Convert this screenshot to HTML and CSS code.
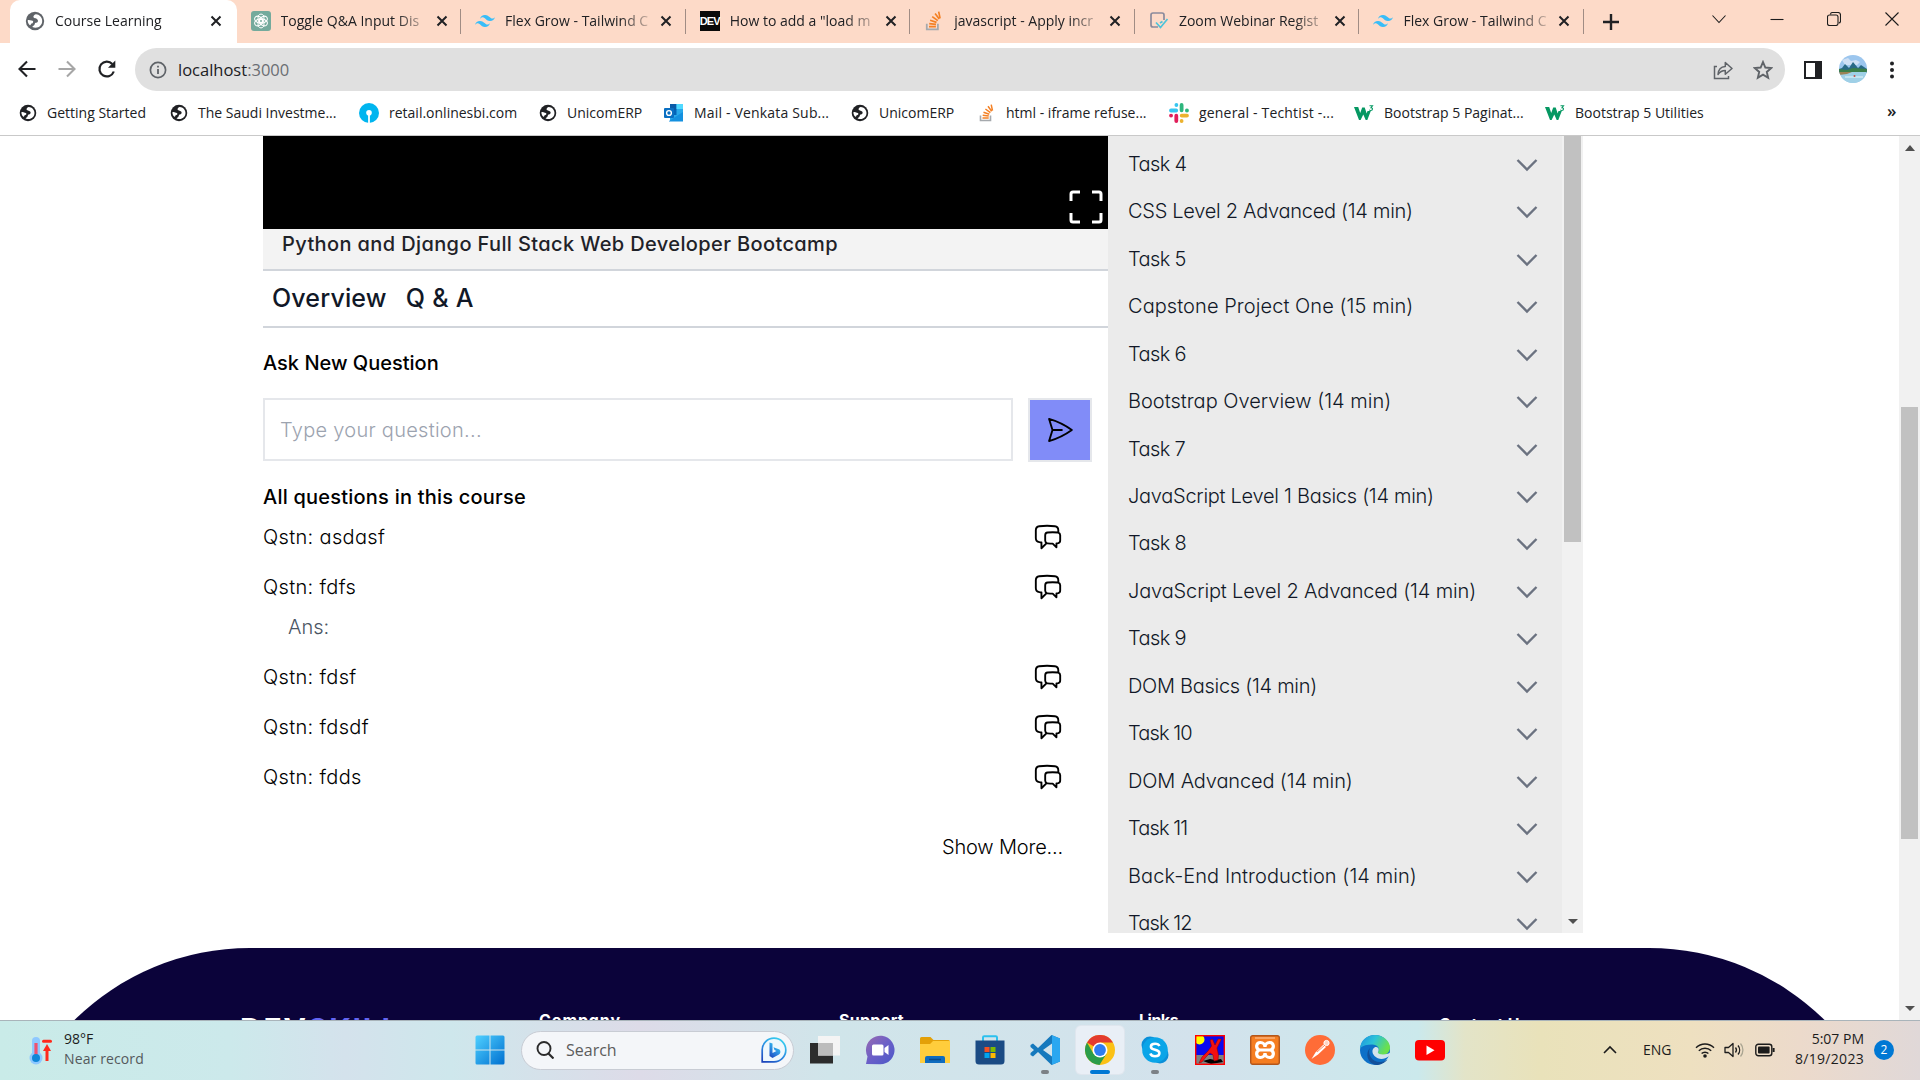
FILE: index.html
```html
<!DOCTYPE html>
<html lang="en">
<head>
<meta charset="utf-8">
<title>Course Learning</title>
<link rel="stylesheet" href="styles.css">
</head>
<body>
<svg class="defs" aria-hidden="true">
  <symbol id="globe" viewBox="0 0 20 20"><circle cx="10" cy="10" r="9.2" fill="currentColor"/><path d="M11 3.2c-1.400.3-2.600 1.200-2.600 2.600 0 1.600 2.900 1.300 4 2.600 1.300 1.500.2 3.300-1.700 3.400-1 .1-.7 1.400-1.400 2.300-.5.700-1.400.9-2 1.900 5 2.300 9.900-1 9.900-6 0-4-3-6.700-6.200-6.800zM2.700 9.200c1.200-.6 2.400.2 3.800.4 1.800.2 2.200 1.300 1.200 2.300-.8.800-1.700.3-1.900 1.500-.1.800-.6 1.100-1.200.6-1.300-1.200-2-3-1.900-4.800z" fill="#fff"/></symbol>
  <symbol id="close" viewBox="0 0 12 12"><path d="M1.500 1.500l9 9M10.500 1.500l-9 9" stroke="#202124" stroke-width="2"/></symbol>
  <symbol id="tailwind" viewBox="0 0 54 33"><path fill="#38bdf8" d="M27 0c-7.200 0-11.700 3.600-13.500 10.800 2.700-3.600 5.850-4.950 9.450-4.050 2.054.513 3.522 2.004 5.147 3.653C30.744 13.090 33.808 16.200 40.500 16.200c7.200 0 11.700-3.600 13.500-10.800-2.700 3.600-5.850 4.950-9.450 4.050-2.054-.513-3.522-2.004-5.147-3.653C36.756 3.110 33.692 0 27 0zM13.500 16.200C6.300 16.200 1.800 19.800 0 27c2.700-3.600 5.850-4.950 9.450-4.050 2.054.514 3.522 2.004 5.147 3.653C17.244 29.290 20.308 32.400 27 32.400c7.200 0 11.700-3.600 13.500-10.800-2.700 3.600-5.850 4.950-9.450 4.050-2.054-.513-3.522-2.004-5.147-3.653C23.256 19.310 20.192 16.200 13.500 16.200z"/></symbol>
  <symbol id="stack" viewBox="0 0 16 18"><path d="M1.500 11.500v5h10v-5" fill="none" stroke="#a5a9ad" stroke-width="1.600"/><path d="M3.500 14h6.200M3.700 11.300l6.100.8M4.500 8.300l5.800 1.900M6.400 5l5 3.600M9 2.200l3.700 5M12.200.6l1.300 6" stroke="#f48024" stroke-width="1.500"/></symbol>
  <symbol id="w3" viewBox="0 0 20 16"><path d="M0 2h4.200l2 6 2-5.500h2.500l2 6L13.500 6h3.300l-3.500 9h-1.600L9.300 9.500 6.600 15H5z" fill="#059862"/><path d="M15.500.8h3l-1.500 1.900c2 0 2 2.800-.2 2.800-.7 0-1.200-.3-1.500-.8" fill="none" stroke="#059862" stroke-width="1.100"/></symbol>
  <symbol id="chev" viewBox="0 0 22 14"><path d="M1.500 2l9.500 9.500L20.500 2" fill="none" stroke="#6b7280" stroke-width="2.400"/></symbol>
  <symbol id="chat" viewBox="0 0 24 24"><path fill="none" stroke="#000" stroke-width="1.500" stroke-linecap="round" stroke-linejoin="round" d="M20.250 8.511c.884.284 1.500 1.128 1.500 2.097v4.286c0 1.136-.847 2.100-1.980 2.193-.34.027-.68.052-1.020.072v3.091l-3-3c-1.354 0-2.694-.055-4.020-.163a2.115 2.115 0 01-.825-.242m9.345-8.334a2.126 2.126 0 00-.476-.095 48.640 48.640 0 00-8.048 0c-1.131.094-1.976 1.057-1.976 2.192v4.286c0 .837.46 1.580 1.155 1.951m9.345-8.334V6.637c0-1.621-1.152-3.026-2.760-3.235A48.455 48.455 0 0011.250 3c-2.115 0-4.198.137-6.240.402-1.608.209-2.760 1.614-2.760 3.235v6.226c0 1.621 1.152 3.026 2.760 3.235.577.075 1.157.14 1.740.194V21l4.155-4.155"/></symbol>
</svg>

<header class="tabstrip">
  <div class="tab active"><svg class="i20 grey"><use href="#globe"/></svg><span class="label"><b>Course Learning</b></span><svg class="x"><use href="#close"/></svg></div>
  <div class="tab"><svg class="i20" viewBox="0 0 20 20"><rect width="20" height="20" rx="3" fill="#74aa9c"/><g fill="none" stroke="#fff" stroke-width="1"><ellipse cx="10" cy="7.300" rx="3" ry="4.200"/><ellipse cx="10" cy="7.300" rx="3" ry="4.200" transform="rotate(60 10 10)"/><ellipse cx="10" cy="7.300" rx="3" ry="4.200" transform="rotate(120 10 10)"/><ellipse cx="10" cy="7.300" rx="3" ry="4.200" transform="rotate(180 10 10)"/><ellipse cx="10" cy="7.300" rx="3" ry="4.200" transform="rotate(240 10 10)"/><ellipse cx="10" cy="7.300" rx="3" ry="4.200" transform="rotate(300 10 10)"/></g></svg><span class="label"><b>Toggle Q&amp;A Input Dis</b></span><svg class="x"><use href="#close"/></svg></div>
  <div class="tab"><svg class="i20"><use href="#tailwind"/></svg><span class="label"><b>Flex Grow - Tailwind C</b></span><svg class="x"><use href="#close"/></svg></div>
  <div class="tab"><span class="dev">DEV</span><span class="label"><b>How to add a "load m</b></span><svg class="x"><use href="#close"/></svg></div>
  <div class="tab"><svg class="i20"><use href="#stack"/></svg><span class="label"><b>javascript - Apply incr</b></span><svg class="x"><use href="#close"/></svg></div>
  <div class="tab"><svg class="i20" viewBox="0 0 20 20"><path d="M9 16H4a2 2 0 01-2-2V4a2 2 0 012-2h9a2 2 0 012 2v5" fill="none" stroke="#8a8a9c" stroke-width="1.700"/><path d="M7 11.500l4.500 5L18.500 8M11 12l2.500-1.500" fill="none" stroke="#4cc3d9" stroke-width="1.700"/></svg><span class="label"><b>Zoom Webinar Regist</b></span><svg class="x"><use href="#close"/></svg></div>
  <div class="tab"><svg class="i20"><use href="#tailwind"/></svg><span class="label"><b>Flex Grow - Tailwind C</b></span><svg class="x"><use href="#close"/></svg></div>
  <svg class="plus" viewBox="0 0 16 16"><path d="M8 0v16M0 8h16" stroke="#202124" stroke-width="2.400"/></svg>
  <div class="winctl">
    <svg viewBox="0 0 14 14"><path d="M.5 3.500L7 10.500l6.500-7"/></svg>
    <svg viewBox="0 0 14 14"><path d="M.5 7.500h13"/></svg>
    <svg viewBox="0 0 14 14"><rect x=".5" y="3" width="10.500" height="10.500" rx="2"/><path d="M3.500 2.500c0-1.200.6-2 2-2h5.500c1.600 0 2.500 1 2.500 2.500V9c0 1.200-.6 2-1.800 2"/></svg>
    <svg viewBox="0 0 14 14"><path d="M.5.5l13 13M13.500.5l-13 13"/></svg>
  </div>
</header>

<div class="toolbar">
  <svg class="nav" viewBox="0 0 20 20"><path d="M18.500 10H3M10 2.500L2.500 10l7.500 7.500" fill="none" stroke="#202124" stroke-width="2.100"/></svg>
  <svg class="nav" viewBox="0 0 20 20"><path d="M1.500 10H17M10 2.500l7.500 7.500-7.500 7.500" fill="none" stroke="#a6a6a6" stroke-width="2.100"/></svg>
  <svg class="nav" viewBox="0 0 20 20"><path d="M16.800 12.500A7.400 7.400 0 1115.300 5" fill="none" stroke="#202124" stroke-width="2.200"/><path d="M18.300 1.500v7.300H11z" fill="#202124"/></svg>
  <div class="omnibox">
    <svg class="info" viewBox="0 0 18 18"><circle cx="9" cy="9" r="7.600" fill="none" stroke="#5f6368" stroke-width="1.700"/><path d="M9 8v5M9 4.800v1.800" stroke="#5f6368" stroke-width="1.800"/></svg>
    <span class="url"><b>localhost<i>:3000</i></b></span>
    <svg class="share" viewBox="0 0 20 20"><path d="M4 6.500H1.500v12h14V16" fill="none" stroke="#5f6368" stroke-width="1.500"/><path d="M5 14.500c.3-5.300 3-7.800 7.300-8.100V2.500L19 8.500l-6.700 5.800v-3.700C9 10.600 6.800 11.900 5 14.500z" fill="none" stroke="#5f6368" stroke-width="1.500" stroke-linejoin="round"/></svg>
    <svg class="star" viewBox="0 0 20 20"><path d="M10 2l2.350 5.500 5.950.5-4.500 3.950 1.350 5.850L10 14.700l-5.150 3.100L6.200 11.950 1.700 8l5.950-.5z" fill="none" stroke="#5f6368" stroke-width="1.900"/></svg>
  </div>
  <svg class="panel" viewBox="0 0 18 18"><rect x="1" y="1" width="16" height="16" fill="#fff" stroke="#202124" stroke-width="2"/><path d="M11 1h6v16h-6z" fill="#202124"/></svg>
  <svg class="avatar" viewBox="0 0 28 28"><clipPath id="av"><circle cx="14" cy="14" r="14"/></clipPath><g clip-path="url(#av)"><path fill="#9cc6ee" d="M0 0h28v28H0z"/><path fill="#cfe0f5" d="M3 5l6-2 3 3 5-1 4 2-3 3H6z"/><path fill="#2a6a86" d="M0 14l3-1 3-4 4 4 4-6 5 6 3-3 6 4v4H0z"/><path fill="#3b7f4a" d="M0 14l8 1 6-2 14 1v3H0z"/><path fill="#9fd0e6" d="M0 17h28v11H0z"/><path fill="#9b8355" d="M0 17l13 0-5 2-8 1z"/><path fill="#c4e4f0" d="M6 21h18v2H6z"/><circle cx="15.500" cy="21" r="1" fill="#c0504a"/></g></svg>
  <svg class="dots" viewBox="0 0 4 18"><circle cx="2" cy="2.500" r="2"/><circle cx="2" cy="9" r="2"/><circle cx="2" cy="15.500" r="2"/></svg>
</div>

<nav class="bookmarks">
  <a><svg class="i18"><use href="#globe"/></svg><b>Getting Started</b></a>
  <a><svg class="i18"><use href="#globe"/></svg><b>The Saudi Investme...</b></a>
  <a><svg class="i20" viewBox="0 0 20 20"><circle cx="10" cy="10" r="10" fill="#00b5ef"/><circle cx="10" cy="9.700" r="2.800" fill="#fff"/><path d="M9.100 10h1.800v10H9.100z" fill="#fff"/></svg><b>retail.onlinesbi.com</b></a>
  <a><svg class="i18"><use href="#globe"/></svg><b>UnicomERP</b></a>
  <a class="loose"><svg class="i20" viewBox="0 0 20 20"><path fill="#28a8ea" d="M6 1h13v17H6z"/><path fill="#0a5ba8" d="M6 1h6.500v6H6z"/><path fill="#50d9ff" d="M12.500 1H19v5h-6.500z"/><path fill="#0364b8" d="M6 7h6.500v5H6z"/><path fill="#1490df" d="M5 18l14-9v9.500H5z"/><rect y="5" width="10" height="10" rx="1" fill="#0a6fc2"/><circle cx="5" cy="10" r="2.400" fill="none" stroke="#fff" stroke-width="1.400"/></svg><b>Mail - Venkata Sub...</b></a>
  <a><svg class="i18"><use href="#globe"/></svg><b>UnicomERP</b></a>
  <a><svg class="i18"><use href="#stack"/></svg><b>html - iframe refuse...</b></a>
  <a class="loose"><svg class="i20" viewBox="0 0 20 20"><g stroke-width="3.800" stroke-linecap="round"><path stroke="#36c5f0" d="M2 7.500h5.200M7.400 2v.1"/><path stroke="#2eb67d" d="M12.600 2v5.300M18 7.500h-.1"/><path stroke="#ecb22e" d="M12.700 12.600H18M12.600 18v-.1"/><path stroke="#e01e5a" d="M7.300 12.700V18M2 12.600h.1"/></g></svg><b>general - Techtist -...</b></a>
  <a><svg class="i20 w3"><use href="#w3"/></svg><b>Bootstrap 5 Paginat...</b></a>
  <a><svg class="i20 w3"><use href="#w3"/></svg><b>Bootstrap 5 Utilities</b></a>
  <span class="more">»</span>
</nav>

<div class="viewport">
  <div class="page">
    <main class="course">
      <section class="lesson">
        <div class="video"><svg viewBox="0 0 34 34"><path d="M2 11V4a2 2 0 012-2h7M23 2h7a2 2 0 012 2v7M32 23v7a2 2 0 01-2 2h-7M11 32H4a2 2 0 01-2-2v-7" fill="none" stroke="#fff" stroke-width="3"/></svg></div>
        <h1 class="title"><b>Python and Django Full Stack Web Developer Bootcamp</b></h1>
        <div class="subtabs"><b class="ov">Overview</b><b class="qa">Q &amp; A</b></div>
        <h2 class="h"><b>Ask New Question</b></h2>
        <div class="ask">
          <div class="field"><b>Type your question...</b></div>
          <div class="send"><svg viewBox="0 0 24 24"><path fill="none" stroke="#000" stroke-width="1.500" stroke-linecap="round" stroke-linejoin="round" d="M6 12L3.269 3.126A59.768 59.768 0 0121.485 12 59.770 59.770 0 013.270 20.876L5.999 12zm0 0h7.500"/></svg></div>
        </div>
        <h2 class="h all"><b>All questions in this course</b></h2>
        <div class="q"><b>Qstn: asdasf</b><svg><use href="#chat"/></svg></div>
        <div class="q"><b>Qstn: fdfs</b><svg><use href="#chat"/></svg></div>
        <div class="ans"><b>Ans:</b></div>
        <div class="q"><b>Qstn: fdsf</b><svg><use href="#chat"/></svg></div>
        <div class="q"><b>Qstn: fdsdf</b><svg><use href="#chat"/></svg></div>
        <div class="q"><b>Qstn: fdds</b><svg><use href="#chat"/></svg></div>
        <div class="show"><b>Show More...</b></div>
      </section>
      <aside class="outline">
        <div class="items">
          <div class="task"><b>Task 4</b><svg><use href="#chev"/></svg></div>
          <div class="snug"><b>CSS Level 2 Advanced (14 min)</b><svg><use href="#chev"/></svg></div>
          <div class="task"><b>Task 5</b><svg><use href="#chev"/></svg></div>
          <div class="wide"><b>Capstone Project One (15 min)</b><svg><use href="#chev"/></svg></div>
          <div class="task"><b>Task 6</b><svg><use href="#chev"/></svg></div>
          <div><b>Bootstrap Overview (14 min)</b><svg><use href="#chev"/></svg></div>
          <div class="task"><b>Task 7</b><svg><use href="#chev"/></svg></div>
          <div class="snug"><b>JavaScript Level 1 Basics (14 min)</b><svg><use href="#chev"/></svg></div>
          <div class="task"><b>Task 8</b><svg><use href="#chev"/></svg></div>
          <div class="near"><b>JavaScript Level 2 Advanced (14 min)</b><svg><use href="#chev"/></svg></div>
          <div class="task"><b>Task 9</b><svg><use href="#chev"/></svg></div>
          <div class="snug"><b>DOM Basics (14 min)</b><svg><use href="#chev"/></svg></div>
          <div class="task ten"><b>Task 10</b><svg><use href="#chev"/></svg></div>
          <div class="near"><b>DOM Advanced (14 min)</b><svg><use href="#chev"/></svg></div>
          <div class="task ten"><b>Task 11</b><svg><use href="#chev"/></svg></div>
          <div class="wide"><b>Back-End Introduction (14 min)</b><svg><use href="#chev"/></svg></div>
          <div class="task ten"><b>Task 12</b><svg><use href="#chev"/></svg></div>
        </div>
        <div class="track inner"><span class="thumb"></span><span class="down"></span></div>
      </aside>
    </main>
    <footer class="foot">
      <div class="logo">DEV<em>SKILL</em></div>
      <div class="f1"><b>Company</b></div>
      <div class="f2"><b>Support</b></div>
      <div class="f3"><b>Links</b></div>
      <div class="f4"><b>Contact Us</b></div>
    </footer>
  </div>
  <div class="track outer"><span class="up"></span><span class="thumb"></span><span class="down"></span></div>
</div>

<div class="taskbar">
  <svg class="therm" viewBox="0 0 24 30"><rect x="3" y="1" width="8" height="22" rx="4" fill="#8ec8ff"/><circle cx="7" cy="22" r="6.500" fill="#8ec8ff"/><path d="M7 7v13" stroke="#f0506e" stroke-width="3.200"/><circle cx="7" cy="22" r="4" fill="#0f86d8"/><path d="M14.500 5.200h7" stroke="#ff2a1c" stroke-width="3" stroke-linecap="round"/><path d="M18 25V13" stroke="#ff2a1c" stroke-width="3"/><path d="M18 8l4 7h-8z" fill="#ff2a1c"/></svg>
  <div class="weather"><span><b>98°F</b></span><span class="dim"><b>Near record</b></span></div>
  <svg class="start" viewBox="0 0 30 30"><defs><linearGradient id="wg" x1="0" y1="0" x2="1" y2="1"><stop offset="0" stop-color="#4fd0ff"/><stop offset="1" stop-color="#0070d0"/></linearGradient></defs><path fill="url(#wg)" d="M2 .5h12.500V14.500H.5V2A1.500 1.500 0 012 .5zM15.500.5H28A1.500 1.500 0 0129.500 2v12.500h-14zM.5 15.500h14v14H2A1.500 1.500 0 01.5 28zM15.500 15.500h14V28a1.500 1.500 0 01-1.500 1.500H15.500z"/></svg>
  <div class="search"><svg class="mag" viewBox="0 0 18 18"><circle cx="8" cy="7.500" r="6.500" fill="none" stroke="#2b2b2b" stroke-width="1.900"/><path d="M12.500 12.500l5 5" stroke="#2b2b2b" stroke-width="2.200"/></svg><span><b>Search</b></span><svg class="bing" viewBox="0 0 26 26"><defs><linearGradient id="bg" x1="0" y1="1" x2=".6" y2="0"><stop offset="0" stop-color="#1a3fb8"/><stop offset=".5" stop-color="#2a87e0"/><stop offset="1" stop-color="#35c8ee"/></linearGradient></defs><path d="M1.200 24.800V13A11.800 11.800 0 1113 24.800z" fill="#eef8fd" stroke="url(#bg)" stroke-width="1.700"/><path d="M8.500 5.500l3 1v9.500l4-2-2-1-1-2.800 6 2.300c1.500 1.500 1 4-.5 5l-6.500 3.500-3-2z" fill="url(#bg)"/></svg></div>
  <div class="apps">
    <div><svg viewBox="0 0 30 30"><path d="M0 8h23v20.500H0z" fill="#2c2c2c"/><path d="M8 1h22v19.500H8z" fill="#f4f4f4"/><path d="M8 8h15v12.500H8z" fill="#bcbcbc"/></svg></div>
    <div><svg viewBox="0 0 30 30"><defs><linearGradient id="tg" x1="0" y1="0" x2="1" y2="1"><stop offset="0" stop-color="#9a6bb0"/><stop offset=".5" stop-color="#6a5fc8"/><stop offset="1" stop-color="#4a58c8"/></linearGradient></defs><path d="M1 29l1.500-7.500A14.300 14.300 0 1115 29.300z" fill="url(#tg)"/><rect x="7" y="9.500" width="11.500" height="11" rx="1.500" fill="#fff"/><path d="M19.500 13l4-3v10l-4-3z" fill="#fff"/></svg></div>
    <div><svg viewBox="0 0 30 30"><path d="M0 3.500A1.500 1.500 0 011.500 2h9l3 3H28.500A1.500 1.500 0 0130 6.500V14H0z" fill="#e3a008"/><path d="M0 9h10l3-3h17v22H0z" fill="#ffcd3c"/><path d="M5 28v-5a2 2 0 012-2h16a2 2 0 012 2v5z" fill="#0f6cbf"/><path d="M9 24.500h12" stroke="#0a4a8a" stroke-width="1.500"/></svg></div>
    <div><svg viewBox="0 0 30 30"><path d="M8 7V2.500A1.200 1.200 0 019.200 1.300h11.600A1.200 1.200 0 0122 2.500V7" fill="none" stroke="#2bc0ee" stroke-width="2"/><path d="M.5 5.500h29V26a3.500 3.500 0 01-3.500 3.500H4A3.500 3.500 0 01.5 26z" fill="#1b4b84"/><path fill="#f25022" d="M9.500 12h5v5h-5z"/><path fill="#7fba00" d="M15.500 12h5v5h-5z"/><path fill="#00a4ef" d="M9.500 18h5v5h-5z"/><path fill="#ffb900" d="M15.500 18h5v5h-5z"/></svg></div>
    <div class="run"><svg viewBox="0 0 30 30"><path d="M21.500 0L30 3.500v23L21.500 30 8 17 3 21.500.5 20V18L4 15 .5 12v-2L3 8.500 8 13zM22 8.500L13 15l9 6.500z" fill="#1579bd" fill-rule="evenodd"/><path d="M22 .2L30 3.500v23l-8 3.300z" fill="#2aa7f0"/></svg></div>
    <div class="run on"><svg viewBox="0 0 30 30"><circle cx="15" cy="15" r="15" fill="#fbc116"/><path d="M15 15L2 7.500A15 15 0 0128 7.500H15z" fill="#e33b2e"/><path d="M2 7.500A15 15 0 0014.500 30L21.500 18.700H8.500z" fill="#2a9d4a"/><circle cx="15" cy="15" r="7.500" fill="#fff"/><circle cx="15" cy="15" r="5.900" fill="#2f7df0"/></svg></div>
    <div class="run"><svg viewBox="0 0 30 30"><circle cx="10" cy="10" r="8.500" fill="#0b8fd8"/><circle cx="20" cy="20" r="8.500" fill="#0b8fd8"/><circle cx="15" cy="15" r="12.800" fill="#0aa5e8"/><path d="M19.500 11c-.8-1.600-2.300-2.200-4.400-2.200-2.400 0-4.200 1-4.200 2.900 0 4.200 8.500 2 8.500 6.300 0 2-1.900 3.200-4.400 3.200-2.300 0-4-.9-4.700-2.700" fill="none" stroke="#fff" stroke-width="2.600"/></svg></div>
    <div><svg viewBox="0 0 30 30"><path d="M.7.7h28.600v28.600H.7z" fill="#0808f0"/><path d="M1 20h28v9H1z" fill="#808080"/><circle cx="4.500" cy="4.500" r="5" fill="#ff0"/><path d="M8 26l7-2 5 1 6-1 2 3-12 2z" fill="#000"/><path d="M15 5l2.500-1 2.500 6 3-6h3.500L22 13l1.500 7-.5 5-4 1-1-6-3-2-4 4-4 5-3 1 3-6 6-6 3.500-5z" fill="#f41010" stroke="#800" stroke-width=".5"/><rect x=".7" y=".7" width="28.600" height="28.600" fill="none" stroke="#f00" stroke-width="1.400"/></svg></div>
    <div><svg viewBox="0 0 30 30"><rect x=".7" y=".7" width="28.600" height="28.600" rx="2" fill="#f57d20" stroke="#b4561a" stroke-width="1.400"/><path d="M5 3h20" stroke="#fbb27a" stroke-width="1.500"/><path d="M10.500 7.500c-4.500 0-5 5.500-1.500 7.500-3.500 2-3 7.500 1.500 7.500 2.500 0 4.500-2 4.500-4.500 0 2.500 2 4.500 4.500 4.500 4.500 0 5-5.500 1.500-7.500 3.500-2 3-7.500-1.500-7.500-2.500 0-4.500 2-4.500 4.500 0-2.500-2-4.500-4.500-4.500zM10 15h10" fill="none" stroke="#fff" stroke-width="3.200"/></svg></div>
    <div><svg viewBox="0 0 30 30"><circle cx="15" cy="15" r="15" fill="#ff6c37"/><path d="M6.500 24l4-6.500 8-8 2.500 2.500-8 7.500z" fill="#fff"/><circle cx="21.500" cy="8" r="2.600" fill="#ffd5c5" stroke="#fff"/><path d="M12 17l8-7" stroke="#ff6c37" stroke-width=".8"/></svg></div>
    <div><svg viewBox="0 0 30 30"><defs><linearGradient id="eg" x1="0" y1="0" x2="1" y2=".4"><stop offset="0" stop-color="#1c8fe0"/><stop offset=".5" stop-color="#2cc3d8"/><stop offset="1" stop-color="#6be04c"/></linearGradient></defs><circle cx="15" cy="15" r="15" fill="#0d70c8"/><path d="M0 13C1 5 7 0 15 0s15 6 15 12.500c0 5-4 7.500-8 7.500s-5-1.500-4-3c2-3.500 0-7.500-6-7.500-5 0-9 1-12 3.500z" fill="url(#eg)"/><path d="M10 13c-3 6 2 14 10 14 3 0 5-.8 7.500-2.500C25 28 20.500 30 16 30 7 28.500 5 18 10 13z" fill="#12509a"/><path d="M18 17c2-3.500-1-6-3.500-4.500-3 2-2.500 6 0 8.500 4 4 10 3.500 14 .5l2 0v-4c-4 3-13.800 2.500-12.500-.5z" fill="#d3e3ec"/></svg></div>
    <div><svg viewBox="0 0 30 30"><rect y="5" width="30" height="20.500" rx="4" fill="#f00"/><path d="M11.500 10.500l8 4.700-8 4.700z" fill="#fff"/></svg></div>
  </div>
  <div class="tray">
    <svg class="caret" viewBox="0 0 14 10"><path d="M1 8l6-6 6 6" fill="none" stroke="#1c1c1c" stroke-width="1.600"/></svg>
    <span class="eng"><b>ENG</b></span>
    <svg class="wifi" viewBox="0 0 20 16"><path d="M1 5.800a12.700 12.700 0 0118 0M3.800 8.800a8.700 8.700 0 0112.400 0M6.600 11.600a4.800 4.800 0 016.800 0" fill="none" stroke="#1c1c1c" stroke-width="1.400"/><circle cx="10" cy="14" r="1.800" fill="#1c1c1c"/></svg>
    <svg class="vol" viewBox="0 0 20 16"><path d="M1 5.500h3.500L9 1.500v13L4.500 10.500H1z" fill="none" stroke="#1c1c1c" stroke-width="1.300" stroke-linejoin="round"/><path d="M11.500 5.500a4 4 0 010 5M14 3.500a7 7 0 010 9" fill="none" stroke="#1c1c1c" stroke-width="1.300"/><path d="M16.500 1.500a10 10 0 010 13" fill="none" stroke="#aaa592" stroke-width="1.300"/></svg>
    <svg class="bat" viewBox="0 0 20 14"><rect x=".8" y="1.300" width="16" height="11.400" rx="2.500" fill="none" stroke="#1c1c1c" stroke-width="1.400"/><rect x="3" y="3.500" width="11.600" height="7" rx="1" fill="#1c1c1c"/><path d="M18.600 5v4" stroke="#1c1c1c" stroke-width="2"/></svg>
    <div class="clock"><span>5:07 PM</span><span class="date">8/19/2023</span></div>
    <span class="badge">2</span>
  </div>
</div>
</body>
</html>
```
FILE: styles.css
```css
* { box-sizing: border-box; }
body { margin: 0; width: 1920px; height: 1080px; overflow: hidden; display: flex; flex-direction: column; background: #fff; font-family: "Open Sans", "Noto Sans", sans-serif; font-size: 14px; color: #202124; }
b { font-weight: inherit; white-space: pre; }
svg { display: block; flex: none; }
.defs { position: absolute; width: 0; height: 0; }
.i20 { width: 20px; height: 20px; }
.i18 { width: 18px; height: 18px; }
.grey { color: #5f6368; }

.tabstrip { height: 43px; flex: none; background: #fddac8; display: flex; align-items: center; padding-left: 10px; }
.tab { width: 224.6px; height: 43px; flex: none; display: flex; align-items: center; padding: 0 0 1px 14px; position: relative; }
.tab.active { width: 226.5px; background: #fff; border-radius: 10px 10px 0 0; padding-left: 15px; }
.tab:not(.active)::after { content: ""; position: absolute; right: 0; top: 9px; height: 25px; width: 1px; background: #a08c84; }
.label { width: 149px; margin: -1px 0 0 10px; -webkit-mask-image: linear-gradient(90deg, #000 115px, transparent 152px); mask-image: linear-gradient(90deg, #000 115px, transparent 152px); }
.x { width: 12px; height: 12px; margin-left: 6px; }
.dev { width: 20px; height: 20px; background: #0a0a0a; color: #fff; font: 700 11px/20px "Liberation Sans", sans-serif; text-align: center; letter-spacing: -.8px; }
.plus { width: 16px; height: 16px; margin-left: 19px; }
.winctl { display: flex; gap: 43.5px; margin-left: 93px; margin-top: -5px; }
.winctl svg { width: 14px; height: 14px; fill: none; stroke: #1c1c1c; stroke-width: 1.1; }

.toolbar { height: 53px; flex: none; display: flex; align-items: center; padding-left: 17px; }
.nav { width: 20px; height: 20px; margin: -1px 20px 0 0; }
.omnibox { width: 1650px; height: 43px; border-radius: 22px; background: #e0e0e0; margin-left: -2px; display: flex; align-items: center; padding: 0 12px 0 14px; }
.info { width: 18px; height: 18px; }
.url { font-size: 16.5px; margin-left: 11px; flex: 1; }
.url i { font-style: normal; color: #6b6e73; }
.share { width: 20px; height: 20px; margin-right: 20px; }
.star { width: 20px; height: 20px; }
.panel { width: 18px; height: 18px; margin-left: 19px; }
.avatar { width: 28px; height: 28px; margin: -1px 0 0 17px; }
.dots { width: 4px; height: 18px; margin-left: 23px; fill: #202124; }

.bookmarks { height: 40px; flex: none; border-bottom: 1px solid #c9c9c9; display: grid; grid-template-columns: 151px 189px 180px 125px 187px 127px 191px 185px 191px 342px 30px; padding: 0 0 6px 19px; align-items: center; }
.bookmarks a { display: flex; align-items: center; gap: 10px; }
.bookmarks b { margin-top: -1px; }
.bookmarks .loose { letter-spacing: .18px; }
.more { font-weight: 600; font-size: 17px; line-height: 20px; margin-top: -4px; }
.w3 { height: 16px; }

.viewport { height: 884px; flex: none; display: flex; overflow: hidden; }
.page { width: 1899px; display: flex; flex-direction: column; overflow: hidden; font-family: "Inter", "Open Sans", sans-serif; font-size: 20px; font-feature-settings: "cv11"; color: #000; font-weight: 360; }
.course { height: 797px; flex: none; display: grid; grid-template-columns: 845px 475px; padding-left: 263px; }
.video { height: 93px; background: #000; display: flex; justify-content: flex-end; padding: 54px 5px 0 0; }
.video svg { width: 34px; height: 34px; }
.title { margin: 0; height: 42px; background: #f3f3f3; border-bottom: 2px solid #d1d5db; padding-left: 19px; font-size: 20px; line-height: 31px; font-weight: 520; letter-spacing: .38px; color: #1f2228; }
.subtabs { height: 57px; border-bottom: 2px solid #d1d5db; display: flex; gap: 19px; padding-left: 9px; font-size: 25px; line-height: 55px; font-weight: 520; color: #111827; }
.ov { letter-spacing: .15px; }
.qa { letter-spacing: .3px; }
.h { margin: 20px 0 0; font-size: 20px; line-height: 30px; font-weight: 550; }
.all { letter-spacing: .22px; }
.ask { display: flex; gap: 15.5px; margin-top: 20px; }
.field { width: 749.5px; height: 63px; border: 2px solid #e5e7eb; padding-left: 15px; line-height: 60px; letter-spacing: .28px; color: #9ca3af; }
.send { width: 64px; height: 64px; background: #818cf8; border: 2px solid #e5e7eb; display: flex; align-items: center; justify-content: center; }
.send svg { width: 30px; height: 30px; }
.q { height: 50px; display: flex; align-items: center; justify-content: space-between; padding-right: 45px; letter-spacing: .34px; }
.q svg { width: 30px; height: 30px; }
.ans { height: 40px; line-height: 30px; padding-left: 25px; color: #4b5563; }
.show { margin-top: 30px; line-height: 30px; text-align: right; padding-right: 45px; letter-spacing: -.17px; }

.outline { background: #ebebeb; display: flex; height: 797px; overflow: hidden; }
.items { flex: 1; padding: 4px 24px 0 20px; color: #111827; }
.items div { height: 47.48px; display: flex; align-items: center; justify-content: space-between; }
.items svg { width: 22px; height: 14px; margin-top: 2px; }
.items .task { letter-spacing: -.62px; }
.items .ten { letter-spacing: -.87px; }
.items .snug { letter-spacing: -.28px; }
.items .near { letter-spacing: -.14px; }
.items .wide { letter-spacing: .07px; }
.track { width: 21px; background: #f1f1f1; display: flex; flex-direction: column; align-items: center; flex: none; }
.thumb { width: 17px; background: #c1c1c1; }
.up { border: 5px solid transparent; border-top: 0; border-bottom: 6px solid #505050; }
.down { border: 5px solid transparent; border-bottom: 0; border-top: 5px solid #505050; }
.inner .thumb { height: 406px; }
.inner .down { margin-top: 377px; }
.outer .up { margin-top: 9px; }
.outer .thumb { margin-top: 256px; height: 432px; }
.outer .down { margin-top: 167px; }

.foot { margin-top: 15px; height: 400px; flex: none; background: #0b033a; border-radius: 250px 250px 0 0; display: flex; color: #fff; font-size: 16px; font-weight: 700; line-height: 20px; padding: 62px 0 0 240px; }
.logo { width: 299px; font-size: 30px; line-height: 36px; padding-top: 1px; letter-spacing: 1.8px; }
.logo em { font-style: normal; color: #6366f1; }
.f1, .f2, .f3 { width: 300px; flex: none; }
.f1 { letter-spacing: .88px; }
.f2 { letter-spacing: .27px; }
.f3 { letter-spacing: -.5px; }
.f4 { padding-top: 4px; letter-spacing: .3px; }

.taskbar { height: 60px; flex: none; border-top: 1px solid #a9b4ba; display: flex; align-items: center; padding-left: 29px; color: #1c1c1c; background: linear-gradient(90deg, #c9ebe8 0, #cce9eb 230px, #d4e2ec 345px, #cee7ec 450px, #dddbe8 640px, #d0e5ea 830px, #d3e2ec 1200px, #cbe9ec 1418px, #e3e4c8 1465px, #e9e2ba 1540px, #eee0c0 1690px, #ecdacb 1800px, #e0d8d8 1920px); }
.therm { width: 24px; height: 30px; }
.weather { width: 410.5px; margin: -3px 0 0 11px; display: flex; flex-direction: column; line-height: 20px; }
.dim { color: #54595c; letter-spacing: .12px; }
.start { width: 30px; height: 30px; margin-top: -1px; }
.search { width: 273px; height: 39px; margin: -1px 0 0 16.5px; border-radius: 20px; background: #f4f6f9; border: 1px solid #c8ccd4; display: flex; align-items: center; padding: 0 6px 0 14px; color: #5c5c5c; font-size: 16px; }
.search span { margin-left: 12px; flex: 1; }
.mag { width: 18px; height: 18px; }
.bing { width: 26px; height: 26px; }
.apps { display: flex; gap: 7px; margin: -1px 0 0 7px; }
.apps div { width: 48px; height: 48px; display: flex; align-items: center; justify-content: center; position: relative; border-radius: 5px; }
.apps svg { width: 30px; height: 30px; }
.run::after { content: ""; position: absolute; bottom: 0; left: 20px; width: 8px; height: 4px; border-radius: 2px; background: #7c8186; }
.apps .on { background: #e9eff6; box-shadow: 0 0 0 1px #dfe6ee; }
.on::after { left: 14px; width: 20px; background: #0078d4; }
.tray { display: flex; align-items: center; margin: -2px 0 0 149px; }
.caret { width: 14px; height: 10px; }
.eng { margin-left: 26px; width: 31px; }
.wifi { width: 20px; height: 16px; margin-left: 21px; }
.vol { width: 20px; height: 16px; margin-left: 9px; }
.bat { width: 20px; height: 14px; margin-left: 11px; }
.clock { width: 89px; display: flex; flex-direction: column; text-align: right; line-height: 20px; margin-top: -1px; }
.date { letter-spacing: .3px; }
.badge { width: 20px; height: 20px; border-radius: 50%; background: #0078d4; color: #fff; font-size: 12px; line-height: 20px; text-align: center; margin-left: 10px; }
```
